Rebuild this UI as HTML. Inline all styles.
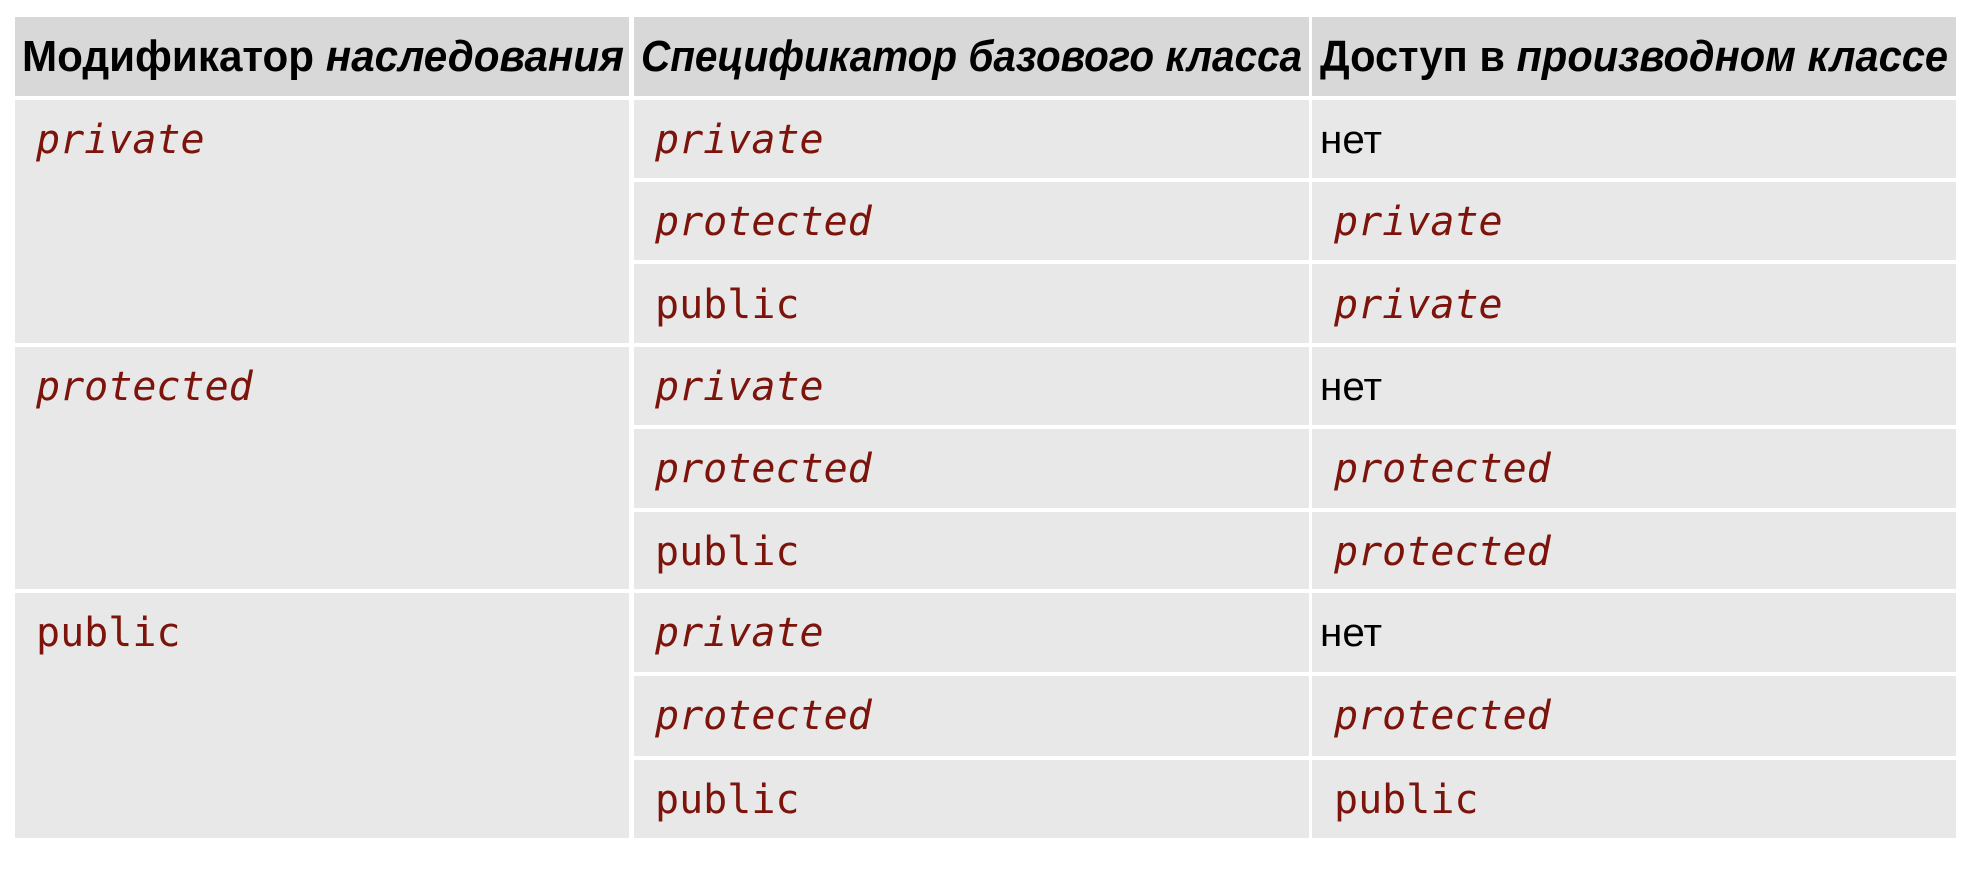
<!DOCTYPE html>
<html><head><meta charset="utf-8"><style>
html,body{margin:0;padding:0;background:#fff;width:1978px;height:872px;overflow:hidden}
svg{display:block}
.h{font-family:"Liberation Sans","DejaVu Sans",sans-serif;font-weight:bold;font-size:44px;fill:#000}
.c{font-family:"DejaVu Sans Mono","Liberation Mono",monospace;font-size:40px;fill:#7c140c}
.n{font-family:"Liberation Sans","DejaVu Sans",sans-serif;font-size:40px;fill:#000}
</style></head><body>
<svg width="1978" height="872" xmlns="http://www.w3.org/2000/svg">
<rect width="1978" height="872" fill="#fff"/>
<rect x="15" y="17" width="614" height="79" fill="#d8d8d8"/>
<rect x="634" y="17" width="675" height="79" fill="#d8d8d8"/>
<rect x="1312" y="17" width="644" height="79" fill="#d8d8d8"/>
<text class="h" x="22" y="71" textLength="602" lengthAdjust="spacingAndGlyphs">Модификатор <tspan font-style="italic">наследования</tspan></text>
<text class="h" x="641" y="71" textLength="661" lengthAdjust="spacingAndGlyphs" font-style="italic">Спецификатор базового класса</text>
<text class="h" x="1320" y="71" textLength="628" lengthAdjust="spacingAndGlyphs">Доступ в <tspan font-style="italic">производном классе</tspan></text>
<rect x="15" y="100" width="614" height="243" fill="#e8e8e8"/>
<rect x="15" y="347" width="614" height="242" fill="#e8e8e8"/>
<rect x="15" y="593" width="614" height="245" fill="#e8e8e8"/>
<text class="c" x="36" y="153" font-style="italic">private</text>
<text class="c" x="36" y="400" font-style="italic">protected</text>
<text class="c" x="36" y="646">public</text>
<g fill="#e8e8e8">
<rect x="634" y="100" width="675" height="78"/><rect x="1312" y="100" width="644" height="78"/>
<rect x="634" y="182" width="675" height="78"/><rect x="1312" y="182" width="644" height="78"/>
<rect x="634" y="264" width="675" height="79"/><rect x="1312" y="264" width="644" height="79"/>
<rect x="634" y="347" width="675" height="78"/><rect x="1312" y="347" width="644" height="78"/>
<rect x="634" y="429" width="675" height="79"/><rect x="1312" y="429" width="644" height="79"/>
<rect x="634" y="512" width="675" height="77"/><rect x="1312" y="512" width="644" height="77"/>
<rect x="634" y="593" width="675" height="79"/><rect x="1312" y="593" width="644" height="79"/>
<rect x="634" y="676" width="675" height="80"/><rect x="1312" y="676" width="644" height="80"/>
<rect x="634" y="760" width="675" height="78"/><rect x="1312" y="760" width="644" height="78"/>
</g>
<text class="c" x="655" y="153" font-style="italic">private</text>
<text class="c" x="655" y="235" font-style="italic">protected</text>
<text class="c" x="655" y="318">public</text>
<text class="c" x="655" y="400" font-style="italic">private</text>
<text class="c" x="655" y="482" font-style="italic">protected</text>
<text class="c" x="655" y="565">public</text>
<text class="c" x="655" y="646" font-style="italic">private</text>
<text class="c" x="655" y="729" font-style="italic">protected</text>
<text class="c" x="655" y="813">public</text>

<text class="n" x="1320" y="153" textLength="62" lengthAdjust="spacingAndGlyphs">нет</text>
<text class="c" x="1334" y="235" font-style="italic">private</text>
<text class="c" x="1334" y="318" font-style="italic">private</text>
<text class="n" x="1320" y="400" textLength="62" lengthAdjust="spacingAndGlyphs">нет</text>
<text class="c" x="1334" y="482" font-style="italic">protected</text>
<text class="c" x="1334" y="565" font-style="italic">protected</text>
<text class="n" x="1320" y="646" textLength="62" lengthAdjust="spacingAndGlyphs">нет</text>
<text class="c" x="1334" y="729" font-style="italic">protected</text>
<text class="c" x="1334" y="813">public</text>
</svg>
</body></html>
